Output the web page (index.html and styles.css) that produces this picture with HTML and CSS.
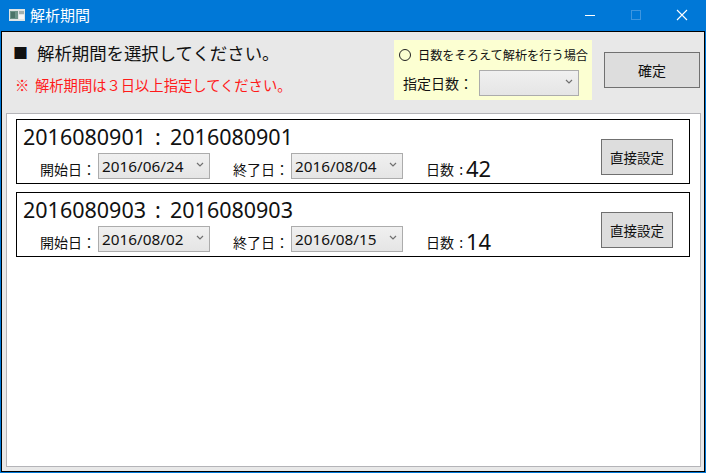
FILE: index.html
```html
<!DOCTYPE html>
<html lang="ja">
<head>
<meta charset="utf-8">
<title>解析期間</title>
<link rel="stylesheet" href="styles.css">
</head>
<body>
<div class="window">
  <header class="titlebar">
    <svg class="app-icon" width="16" height="12" viewBox="0 0 16 12">
      <rect x="0" y="0" width="16" height="12" fill="#dfe5e5"/>
      <rect x="1" y="2" width="8" height="8" fill="#6c9488"/>
      <rect x="2" y="3" width="4" height="6" fill="#4a7468"/>
      <rect x="10" y="2" width="5" height="3" fill="#a3b0ae"/>
      <rect x="10" y="6" width="5" height="4" fill="#f6f6f6"/>
    </svg>
    <span class="window-title">解析期間</span>
    <div class="controls">
      <svg class="ctl" width="46" height="31" viewBox="0 0 46 31"><path d="M18 15.5h10" stroke="#fff" fill="none"/></svg>
      <svg class="ctl" width="46" height="31" viewBox="0 0 46 31"><rect x="18.5" y="10.5" width="9" height="9" stroke="#3d96e0" fill="none"/></svg>
      <svg class="ctl" width="46" height="31" viewBox="0 0 46 31"><path d="M18 10l10 10M28 10L18 20" stroke="#fff" stroke-width="1.1" fill="none"/></svg>
    </div>
  </header>
  <main class="client">
    <section class="top">
      <div class="messages">
        <p class="heading"><span class="bullet">■</span><span>解析期間を選択してください。</span></p>
        <p class="warning"><span class="note">※</span><span>解析期間は３日以上指定してください。</span></p>
      </div>
      <div class="option">
        <div class="radio-row"><span class="radio"></span><span>日数をそろえて解析を行う場合</span></div>
        <div class="days-row">
          <span class="days-label">指定日数：</span>
          <div class="combo combo-days">
            <svg class="chev" width="8" height="5" viewBox="0 0 8 5"><path d="M1 1l3 3 3-3" stroke="#707070" stroke-width="1.2" fill="none"/></svg>
          </div>
        </div>
      </div>
      <button class="btn btn-confirm">確定</button>
    </section>
    <section class="panel">
      <article class="card">
        <div class="card-main">
          <div class="card-title">2016080901<span class="sep">:</span>2016080901</div>
          <div class="fields">
            <span class="lbl lbl-start">開始日：</span>
            <div class="combo combo-date"><span>2016/06/24</span>
              <svg class="chev" width="8" height="5" viewBox="0 0 8 5"><path d="M1 1l3 3 3-3" stroke="#707070" stroke-width="1.2" fill="none"/></svg></div>
            <span class="lbl lbl-end">終了日：</span>
            <div class="combo combo-date"><span>2016/08/04</span>
              <svg class="chev" width="8" height="5" viewBox="0 0 8 5"><path d="M1 1l3 3 3-3" stroke="#707070" stroke-width="1.2" fill="none"/></svg></div>
            <span class="lbl lbl-days">日数 :</span><span class="count">42</span>
          </div>
        </div>
        <button class="btn btn-direct">直接設定</button>
      </article>
      <article class="card">
        <div class="card-main">
          <div class="card-title">2016080903<span class="sep">:</span>2016080903</div>
          <div class="fields">
            <span class="lbl lbl-start">開始日：</span>
            <div class="combo combo-date"><span>2016/08/02</span>
              <svg class="chev" width="8" height="5" viewBox="0 0 8 5"><path d="M1 1l3 3 3-3" stroke="#707070" stroke-width="1.2" fill="none"/></svg></div>
            <span class="lbl lbl-end">終了日：</span>
            <div class="combo combo-date"><span>2016/08/15</span>
              <svg class="chev" width="8" height="5" viewBox="0 0 8 5"><path d="M1 1l3 3 3-3" stroke="#707070" stroke-width="1.2" fill="none"/></svg></div>
            <span class="lbl lbl-days">日数 :</span><span class="count">14</span>
          </div>
        </div>
        <button class="btn btn-direct">直接設定</button>
      </article>
    </section>
  </main>
</div>
</body>
</html>
```
FILE: styles.css
```css
* { box-sizing: border-box; }
html, body { margin: 0; padding: 0; }
body {
  width: 706px;
  height: 473px;
  overflow: hidden;
  font-family: "Noto Sans", "Noto Sans CJK JP", sans-serif;
  color: #111;
}
p { margin: 0; }

.window {
  width: 706px;
  height: 473px;
  background: #0078d7;
  display: flex;
  flex-direction: column;
  padding: 0 1px 1px;
}

.titlebar {
  height: 31px;
  flex: none;
  display: flex;
  align-items: center;
  color: #fff;
  padding-left: 8px;
}
.app-icon { flex: none; margin-top: -2px; }
.window-title {
  font-family: "Noto Sans CJK JP", sans-serif;
  font-size: 15px;
  line-height: 20px;
  margin-left: 5px;
  margin-top: -2px;
}
.controls { margin-left: auto; display: flex; margin-right: 0; }
.ctl { display: block; }

.client {
  flex: 1;
  min-height: 0;
  border: 1px solid #000;
  background: #e8e8e8;
  display: flex;
  flex-direction: column;
  padding: 8px 3px 4px 4px;
}

.top {
  height: 73px;
  flex: none;
  display: flex;
}
.messages { width: 388px; padding-left: 7px; }
.heading {
  font-family: "Noto Sans CJK JP", sans-serif;
  font-size: 17.4px;
  line-height: 26px;
  display: flex;
}
.bullet { width: 24px; font-size: 15px; }
.warning {
  font-family: "Noto Sans CJK JP", sans-serif;
  font-size: 14.3px;
  line-height: 20px;
  color: #ff1a1a;
  display: flex;
  margin-top: 9px;
}
.note { width: 22px; padding-left: 2px; }

.option {
  width: 198px;
  height: 60px;
  background: #fcffd2;
  font-family: "Noto Sans CJK JP", sans-serif;
  padding: 5px 0 0 5px;
}
.radio-row {
  display: flex;
  align-items: center;
  font-size: 12.2px;
  line-height: 20px;
}
.radio {
  width: 12px;
  height: 12px;
  border: 1px solid #222;
  border-radius: 50%;
  margin-right: 7px;
}
.days-row { display: flex; align-items: center; margin-top: 5px; }
.days-label { font-size: 14px; line-height: 26px; width: 80px; padding-left: 4px; }

.combo {
  border: 1px solid #acacac;
  background: linear-gradient(#f0f0f0, #e5e5e5);
  position: relative;
  display: flex;
  align-items: center;
}
.chev { position: absolute; right: 5px; top: 8px; }
.combo-days { width: 100px; height: 26px; }
.combo-date {
  width: 112px;
  height: 26px;
  font-size: 15.3px;
  padding-left: 3px;
  color: #111;
}

.btn {
  font-family: "Noto Sans CJK JP", sans-serif;
  background: #dddddd;
  border: 1px solid #707070;
  padding: 0;
  color: #111;
  border-radius: 0;
}
.btn-confirm {
  width: 96px;
  height: 36px;
  margin: 12px 0 0 12px;
  font-size: 14px;
}
.btn-direct {
  width: 72px;
  height: 36px;
  font-size: 13.5px;
  flex: none;
  margin-top: 19px;
}

.panel {
  flex: 1;
  min-height: 0;
  border: 1px solid #b4b4b8;
  background: #fff;
  padding: 5px 10px 0 9px;
  display: flex;
  flex-direction: column;
  gap: 8px;
}

.card {
  height: 65px;
  flex: none;
  border: 1px solid #000;
  display: flex;
  padding-left: 6px;
}
.card-main { width: 578px; }
.card-title { font-size: 21.5px; line-height: 28px; margin-top: 3px; }
.sep { display: inline-block; width: 24px; text-align: center; }
.fields {
  display: flex;
  align-items: center;
  height: 26px;
  margin-top: 2px;
}
.lbl {
  font-family: "Noto Sans CJK JP", sans-serif;
  font-size: 14px;
  line-height: 20px;
  margin-top: 6px;
  white-space: nowrap;
}
.lbl-start { margin-left: 17px; width: 58px; }
.lbl-end { margin-left: 23px; width: 58px; }
.lbl-days { margin-left: 23px; width: 40px; word-spacing: 2px; }
.count { font-size: 22px; line-height: 26px; margin-top: 3px; }
```
